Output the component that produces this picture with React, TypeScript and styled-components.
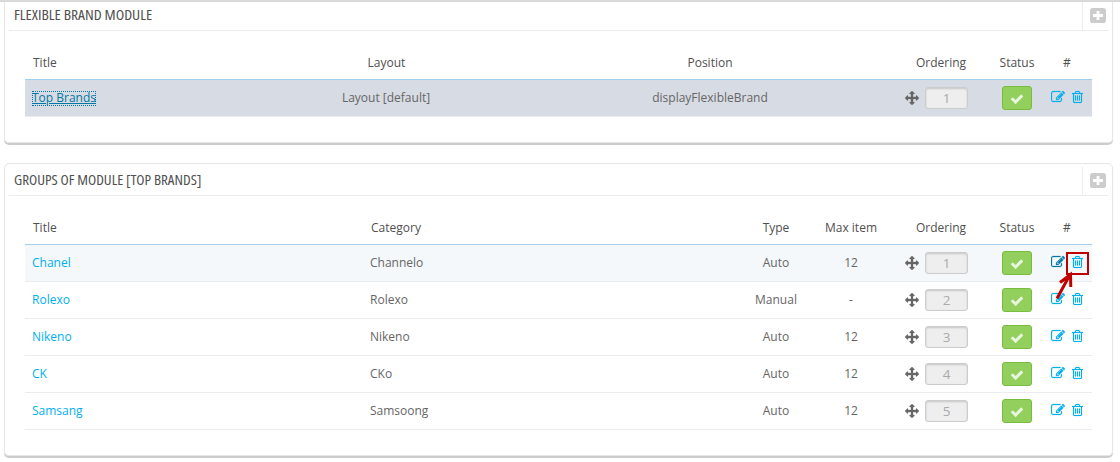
import React from "react";
import styled, { createGlobalStyle, css } from "styled-components";

const GlobalStyle = createGlobalStyle`
  *, *::before, *::after { box-sizing: border-box; }
  body {
    margin: 0;
    background: #fff;
    color: #666;
    font: 12px/18px "Open Sans", sans-serif;
    overflow: hidden;
  }
`;

const Page = styled.main`
  height: 462px;
  padding: 0 7px 0 4px;
  border-top: 2px solid #d9d9d9;
  overflow: hidden;
`;

const Panel = styled.section<{ $clipped?: boolean }>`
  border: 1px solid #e6e6e6;
  border-radius: 5px;
  box-shadow: 0 2px 0 #ccc;
  padding: 0 4px 25px;
  margin-bottom: 20px;
  ${(p) =>
    p.$clipped &&
    css`
      border-top: 0;
      border-radius: 0 0 5px 5px;
    `}
`;

const PanelHeader = styled.header<{ $clipped?: boolean }>`
  display: flex;
  justify-content: space-between;
  align-items: stretch;
  height: ${(p) => (p.$clipped ? 29 : 32)}px;
  padding-top: ${(p) => (p.$clipped ? 0 : 3)}px;
  border-bottom: 1px solid #eaedef;
`;

const PanelTitle = styled.h3<{ $stretch: number }>`
  margin: 0;
  padding-left: 5px;
  color: #505050;
  font: 400 14px/26px "Open Sans", sans-serif;
  font-stretch: 75%;
  white-space: nowrap;
  text-transform: uppercase;

  span {
    display: inline-block;
    transform-origin: 0 50%;
    transform: scaleX(${(p) => p.$stretch});
  }
`;

const AddButton = styled.button`
  display: flex;
  align-items: center;
  width: 26px;
  margin: 0;
  padding: 0 0 1px 7px;
  border: 0;
  border-left: 1px solid #eaedef;
  background: none;

  svg { display: block; }
`;

const Table = styled.div`
  margin: 0 16px;
`;

const Row = styled.div<{ $columns: string; $tone?: string }>`
  display: grid;
  grid-template-columns: ${(p) => p.$columns};
  align-items: center;
  height: 37px;
  border-bottom: 1px solid #eaedef;
  background: ${(p) => p.$tone ?? "transparent"};
`;

const HeadRow = styled(Row)`
  height: 49px;
  padding-top: 16px;
  border-bottom: 1px solid #a0d0eb;
  color: #505050;
`;

const Cell = styled.div<{ $align?: "left" | "center"; $pad?: string }>`
  text-align: ${(p) => p.$align ?? "center"};
  padding: ${(p) => p.$pad ?? "0"};
  white-space: nowrap;
`;

const Link = styled.a<{ $focused?: boolean }>`
  color: #00aff0;
  text-decoration: none;
  ${(p) =>
    p.$focused &&
    css`
      display: inline-block;
      height: 15px;
      line-height: 14px;
      color: #0077a4;
      text-decoration: underline;
      outline: 1px dotted #0077a4;
      outline-offset: -1px;
    `}
`;

const OrderingCell = styled.div`
  display: flex;
  align-items: center;
  gap: 6px;
  padding-left: 17px;
`;

const OrderInput = styled.input`
  width: 43px;
  height: 22px;
  margin: 0;
  padding: 0;
  border: 1px solid #ccc;
  border-radius: 3px;
  background: #eee;
  box-shadow: inset 0 1px 2px rgba(0, 0, 0, 0.17);
  color: #aaa;
  font: 13.5px/18px "Open Sans", sans-serif;
  text-align: center;
`;

const StatusButton = styled.button`
  display: flex;
  align-items: center;
  justify-content: center;
  width: 30px;
  height: 24px;
  margin: 0 auto;
  padding: 2px 0 0;
  border: 1px solid #79bd3c;
  border-radius: 3px;
  background: #92cf5c;
  color: #e9f5df;
`;

const Actions = styled.div`
  display: flex;
  gap: 7px;
  padding: 0 0 2px 10px;
  color: #00aff0;
`;

const ActionIcon = styled.span<{ $active?: boolean }>`
  position: relative;
  display: flex;
  color: ${(p) => (p.$active ? "#0077a4" : "inherit")};
`;

const Highlight = styled.span`
  position: absolute;
  left: -6px;
  top: -3px;
  width: 23px;
  height: 23px;
  border: 2px solid #c00000;
`;

const Pointer = styled.svg`
  position: absolute;
  left: -18px;
  top: 16px;
  z-index: 1;
`;

const paths = {
  move: "M1792 896q0 26-19 45l-256 256q-19 19-45 19t-45-19-19-45v-128h-384v384h128q26 0 45 19t19 45-19 45l-256 256q-19 19-45 19t-45-19l-256-256q-19-19-19-45t19-45 45-19h128v-384h-384v128q0 26-19 45t-45 19-45-19l-256-256q-19-19-19-45t19-45l256-256q19-19 45-19t45 19 19 45v128h384v-384h-128q-26 0-45-19t-19-45 19-45l256-256q19-19 45-19t45 19l256 256q19 19 19 45t-19 45-45 19h-128v384h384v-128q0-26 19-45t45-19 45 19l256 256q19 19 19 45z",
  trash:
    "M704 736v576q0 14-9 23t-23 9h-64q-14 0-23-9t-9-23v-576q0-14 9-23t23-9h64q14 0 23 9t9 23zm256 0v576q0 14-9 23t-23 9h-64q-14 0-23-9t-9-23v-576q0-14 9-23t23-9h64q14 0 23 9t9 23zm256 0v576q0 14-9 23t-23 9h-64q-14 0-23-9t-9-23v-576q0-14 9-23t23-9h64q14 0 23 9t9 23zm128 724v-948h-896v948q0 22 7 40.5t14.5 27 10.5 8.5h832q3 0 10.5-8.5t14.5-27 7-40.5zm-672-1076h448l-48-117q-7-9-17-11h-317q-10 2-17 11zm928 32v64q0 14-9 23t-23 9h-96v948q0 83-47 143.5t-113 60.5h-832q-66 0-113-58.5t-47-141.5v-952h-96q-14 0-23-9t-9-23v-64q0-14 9-23t23-9h309l70-167q15-37 54-63t79-26h320q40 0 79 26t54 63l70 167h309q14 0 23 9t9 23z",
  edit: "M888 1184l116-116-152-152-116 116v56h96v96h56zm440-720q-16-16-33 1l-350 350q-17 17-1 33t33-1l350-350q17-17 1-33zm80 594v190q0 119-84.5 203.5t-203.5 84.5h-832q-119 0-203.5-84.5t-84.5-203.5v-832q0-119 84.5-203.5t203.5-84.5h832q63 0 117 25 15 7 18 23 3 17-9 29l-49 49q-14 14-32 8-23-6-45-6h-832q-66 0-113 47t-47 113v832q0 66 47 113t113 47h832q66 0 113-47t47-113v-126q0-13 9-22l64-64q15-15 35-7t20 29zm-96-738l288 288-672 672h-288v-288zm444 132l-92 92-288-288 92-92q28-28 68-28t68 28l152 152q28 28 28 68t-28 68z",
  check:
    "M1671 566q0 40-28 68l-724 724-136 136q-28 28-68 28t-68-28l-136-136-362-362q-28-28-28-68t28-68l136-136q28-28 68-28t68 28l294 295 656-657q28-28 68-28t68 28l136 136q28 28 28 68z",
};

interface IconProps {
  name: keyof typeof paths;
  size?: number;
  width?: number;
  box?: string;
  weight?: number;
}

function Icon({ name, size = 14, width, box = "0 0 1792 1792", weight = 0 }: IconProps) {
  return (
    <svg width={width ?? size} height={size} viewBox={box} fill="currentColor" stroke="currentColor" strokeWidth={weight} aria-hidden>
      <path d={paths[name]} />
    </svg>
  );
}

function PlusSquare() {
  return (
    <svg width="16" height="15" viewBox="0 0 16 15" aria-hidden>
      <rect width="16" height="15" rx="2.8" fill="#ccc" />
      <path d="M3 7.5h10M8 3v9" stroke="#fff" strokeWidth="2.8" />
    </svg>
  );
}

function Ordering({ value }: { value: number }) {
  return (
    <OrderingCell>
      <Icon name="move" weight={40} />
      <OrderInput defaultValue={value} disabled />
    </OrderingCell>
  );
}

function Status() {
  return (
    <StatusButton aria-label="Enabled">
      <Icon name="check" size={14} />
    </StatusButton>
  );
}

function RowActions({ marked }: { marked?: boolean }) {
  return (
    <Actions>
      <ActionIcon $active={marked}>
        <Icon name="edit" weight={30} />
      </ActionIcon>
      <ActionIcon>
        <Icon name="trash" width={11} box="192 0 1408 1792" weight={20} />
        {marked && (
          <>
            <Highlight />
            <Pointer width="22" height="32" viewBox="0 0 22 32" fill="none" stroke="#c00000" strokeWidth="3">
              <path d="M3 27.5L15.5 4.500M6 11.500L16.500 3.500L16.800 16" />
            </Pointer>
          </>
        )}
      </ActionIcon>
    </Actions>
  );
}

const moduleColumns = "199px 324px 340px 105px 48px 51px";
const groupColumns = "337px 376px 76px 74px 105px 48px 51px";

const groups = [
  { title: "Chanel", category: "Channelo", type: "Auto", max: "12" },
  { title: "Rolexo", category: "Rolexo", type: "Manual", max: "-" },
  { title: "Nikeno", category: "Nikeno", type: "Auto", max: "12" },
  { title: "CK", category: "CKo", type: "Auto", max: "12" },
  { title: "Samsang", category: "Samsoong", type: "Auto", max: "12" },
];

export default function App() {
  return (
    <>
      <GlobalStyle />
      <Page>
        <Panel $clipped>
          <PanelHeader $clipped>
            <PanelTitle $stretch={1.113}>
              <span>Flexible brand module</span>
            </PanelTitle>
            <AddButton aria-label="Add module">
              <PlusSquare />
            </AddButton>
          </PanelHeader>
          <Table>
            <HeadRow $columns={moduleColumns}>
              <Cell $align="left" $pad="0 0 0 8px">Title</Cell>
              <Cell $pad="0 0 0 1px">Layout</Cell>
              <Cell $pad="0 16px 0 0">Position</Cell>
              <Cell $pad="0 0 0 1px">Ordering</Cell>
              <Cell>Status</Cell>
              <Cell $pad="0 0 0 1px">#</Cell>
            </HeadRow>
            <Row $columns={moduleColumns} $tone="#d7dbe3">
              <Cell $align="left" $pad="0 0 0 7px">
                <Link $focused>Top Brands</Link>
              </Cell>
              <Cell>Layout [default]</Cell>
              <Cell $pad="0 16px 0 0">displayFlexibleBrand</Cell>
              <Ordering value={1} />
              <Status />
              <RowActions />
            </Row>
          </Table>
        </Panel>

        <Panel>
          <PanelHeader>
            <PanelTitle $stretch={1.075}>
              <span>Groups of module [Top Brands]</span>
            </PanelTitle>
            <AddButton aria-label="Add group">
              <PlusSquare />
            </AddButton>
          </PanelHeader>
          <Table>
            <HeadRow $columns={groupColumns}>
              <Cell $align="left" $pad="0 0 0 8px">Title</Cell>
              <Cell $align="left" $pad="0 0 0 9px">Category</Cell>
              <Cell>Type</Cell>
              <Cell>Max item</Cell>
              <Cell $pad="0 0 0 1px">Ordering</Cell>
              <Cell>Status</Cell>
              <Cell $pad="0 0 0 1px">#</Cell>
            </HeadRow>
            {groups.map((g, i) => (
              <Row key={g.title} $columns={groupColumns} $tone={i === 0 ? "#f4f8fb" : undefined}>
                <Cell $align="left" $pad="0 0 0 7px">
                  <Link>{g.title}</Link>
                </Cell>
                <Cell $align="left" $pad="0 0 0 8px">{g.category}</Cell>
                <Cell>{g.type}</Cell>
                <Cell>{g.max}</Cell>
                <Ordering value={i + 1} />
                <Status />
                <RowActions marked={i === 0} />
              </Row>
            ))}
          </Table>
        </Panel>
      </Page>
    </>
  );
}
